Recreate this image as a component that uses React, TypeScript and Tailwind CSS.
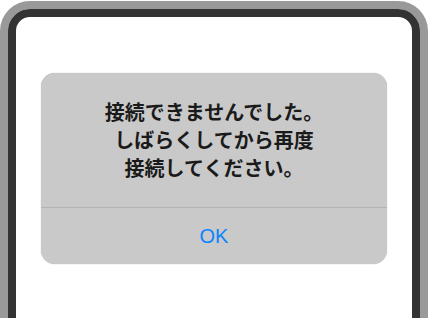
const App = () => {
  return (
    <div className="w-[428px] h-[318px] overflow-hidden bg-white">
      <div className="mt-px h-[400px] rounded-[30px] border-8 border-[#999999]">
        <div className="h-full rounded-[22px] border-8 border-[#333333] bg-white pt-[56px] px-[25px]">
          <div className="w-[346px] rounded-[14px] bg-[#c9c9c9] shadow-[0_0_1px_rgba(0,0,0,0.35)]">
            <div
              className="pt-[25px] pb-[25px] text-center text-[20px] leading-[28px] font-semibold text-[#1a1a1a]"
              style={{ fontFamily: '"Noto Sans CJK JP", "Noto Sans", sans-serif' }}
            >
              <p>接続できませんでした。</p>
              <p>しばらくしてから再度</p>
              <p>接続してください。</p>
            </div>
            <div className="h-px bg-[#b3b3b3]" />
            <div
              className="flex h-[56px] items-center justify-center text-[20px] text-[#0a84ff]"
              style={{ fontFamily: '"Liberation Sans", Arial, sans-serif' }}
            >
              OK
            </div>
          </div>
        </div>
      </div>
    </div>
  );
};

export default App;
